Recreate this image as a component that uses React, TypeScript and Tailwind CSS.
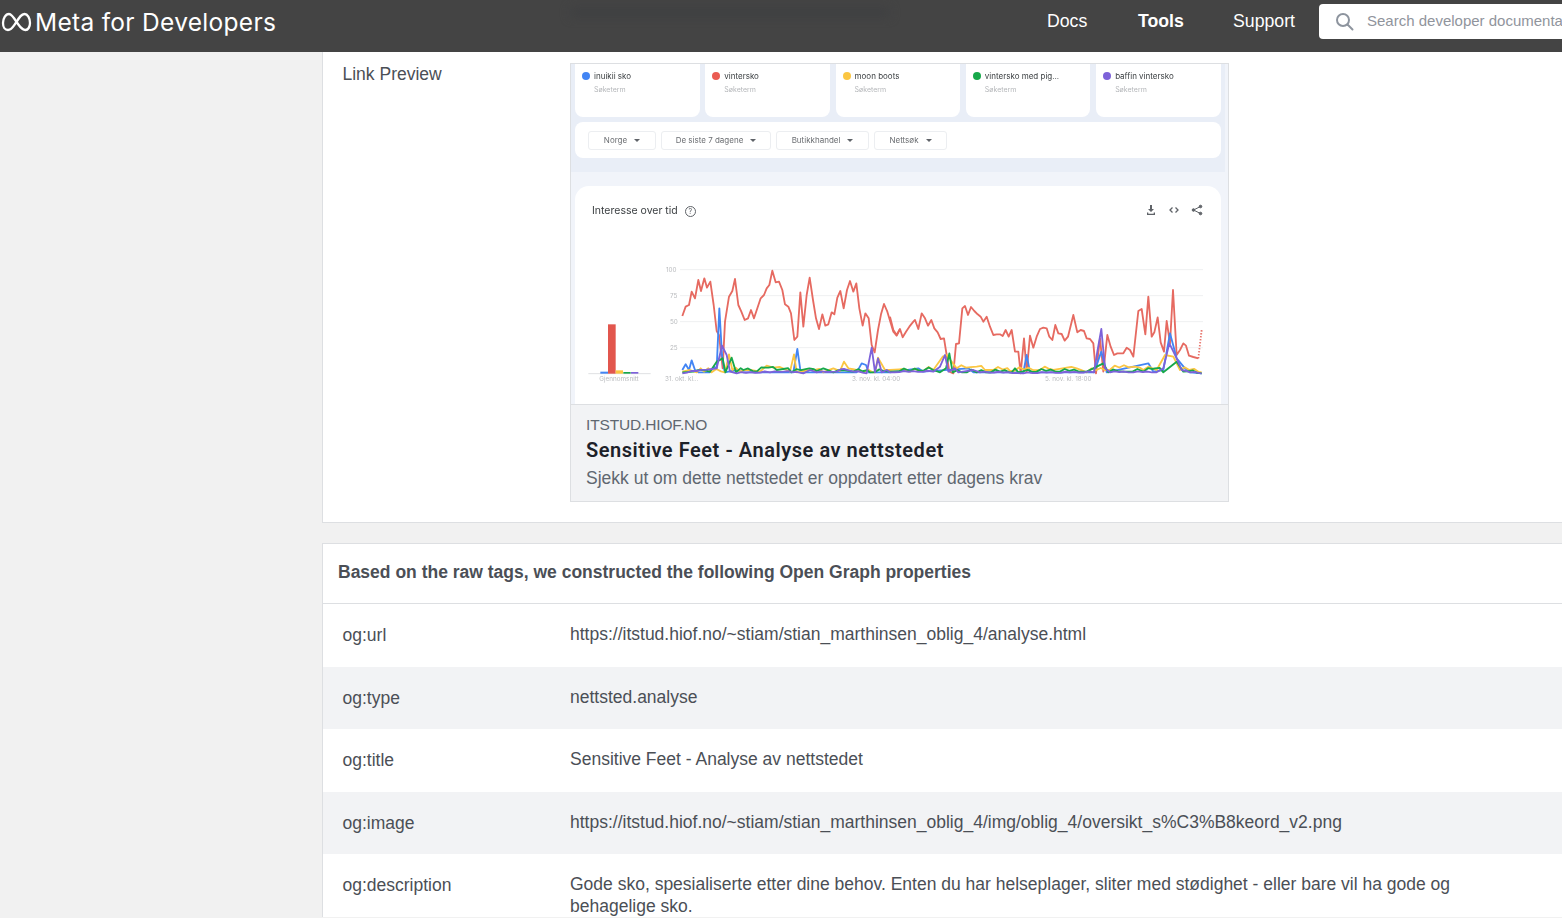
const redA: number[][] = [
  [337,183],[347,155],[357,150],[365,110],[375,130],[385,75],[393,108],[403,70],[411,98],[421,80],[431,150],[440,228],[447,240],[458,340],[465,200],[477,125],[487,108],[495,72],[505,150],[514,170],[524,195],[534,190],[543,165],[552,190],[562,160],[572,130],[582,120],[590,100],[598,90],[607,47],[617,82],[627,80],[637,105],[645,148],[655,155],[663,175],[673,255],[682,245],[691,112],[700,215],[710,120],[719,68],[729,135],[738,190],[747,222],[757,178],[766,212],[775,208],[785,172],[793,178],[802,128],[811,108],[821,160],[831,105],[840,78],[850,110],[859,85],[868,160],[878,212],[886,175],[896,190],[905,270],[914,292],[924,225],[933,178],[942,147],[952,170],[961,200],[970,230],[980,242],[990,222],
];

// second half of the red line, read off with its origin 960 units further right
const redB: number[][] = [
  [0,185],[10,225],[20,240],[30,222],[38,247],[48,230],[58,215],[70,200],[75,195],[85,222],[95,175],[105,190],[114,212],[124,195],[133,220],[143,232],[152,252],[162,250],[170,300],[178,350],[190,355],[198,267],[207,265],[217,160],[225,153],[234,180],[243,156],[253,168],[263,178],[272,185],[280,200],[290,185],[300,215],[310,240],[320,238],[330,238],[338,243],[347,225],[356,245],[365,225],[375,290],[385,290],[392,355],[402,250],[410,350],[420,242],[430,278],[440,245],[450,222],[460,218],[470,220],[478,245],[487,255],[496,210],[505,235],[515,237],[524,257],[534,245],[550,180],[562,232],[572,225],[582,228],[590,250],[600,252],[610,265],[618,355],[630,250],[640,350],[652,240],[662,275],[672,300],[682,295],[700,295],[710,278],[720,285],[730,305],[745,168],[755,162],[766,238],[775,125],[785,245],[793,232],[803,187],[812,262],[822,290],[830,198],[840,265],[849,105],[860,300],[870,285],[880,265],[888,272],[897,302],[910,306],[925,310],
];

const toPoints = (pts: number[][], dx = 0) => pts.map(([x, y]) => `${x + dx},${y}`).join(' ');

// small bumps for the long flat stretches along the baseline
const jag = (line: string, amp: number) => {
  const pts = line.split(' ').map((p) => p.split(',').map(Number));
  const out: string[] = [];
  pts.forEach(([x, y], i) => {
    out.push(`${x},${y}`);
    const next = pts[i + 1];
    if (!next || y < 335 || next[1] < 335) return;
    for (let sx = x + 14; sx < next[0] - 6; sx += 14) {
      const t = (sx - x) / (next[0] - x);
      const bump = [0, amp, amp * 0.3, amp * 0.8, 0][Math.floor(sx / 14) % 5];
      out.push(`${sx},${Math.min(355, y + (next[1] - y) * t) - bump}`);
    }
  });
  return out.join(' ');
};

const blue = '337,345 347,328 357,345 365,316 375,345 385,352 420,352 432,335 440,340 448,160 456,300 464,352 500,345 520,352 660,352 670,352 682,282 692,352 860,352 875,325 888,330 896,352 960,352 1045,340 1060,350 1195,340 1210,352 1360,352 1370,300 1380,352 1572,352 1594,290 1610,352 1735,325 1750,350 1780,345 1800,235 1820,310 1845,340 1860,352 1895,355';
const yellow = '337,350 360,345 380,352 392,340 402,350 415,340 425,352 465,352 477,298 487,345 497,338 510,350 540,345 570,350 590,332 610,338 630,336 650,345 660,350 672,298 680,352 720,345 760,352 790,340 810,348 822,320 835,340 860,345 880,352 915,352 924,308 945,345 960,345 1000,342 1020,350 1090,345 1118,305 1130,300 1160,340 1220,335 1245,345 1270,345 1320,348 1410,345 1450,345 1490,338 1520,340 1550,352 1695,335 1720,345 1735,335 1760,345 1785,300 1810,305 1830,345 1895,352';
const green = '337,352 370,350 400,345 420,350 440,320 458,310 466,352 485,308 498,352 520,345 560,350 595,338 620,345 640,342 665,352 718,340 740,348 760,340 790,352 820,345 850,350 900,352 960,350 1020,348 1090,345 1110,352 1128,340 1138,295 1148,352 1220,352 1325,352 1335,340 1345,352 1400,350 1550,350 1600,325 1615,352 1660,350 1720,350 1755,340 1780,352 1820,320 1840,350 1895,355';
const purple = '337,355 440,340 456,272 470,300 480,350 500,355 600,352 640,350 700,355 720,345 740,352 800,350 822,342 850,350 890,355 905,278 915,352 924,310 935,352 950,345 960,352 1090,350 1110,335 1125,300 1135,350 1155,340 1165,352 1210,345 1230,352 1360,355 1572,352 1582,290 1594,222 1605,340 1620,352 1760,352 1780,340 1798,265 1820,310 1835,345 1860,352 1895,355';

const terms = [
  { name: 'inuikii sko', dot: 'bg-[#4285f4]' },
  { name: 'vintersko', dot: 'bg-[#ea5b52]' },
  { name: 'moon boots', dot: 'bg-[#fbc642]' },
  { name: 'vintersko med pig...', dot: 'bg-[#17a84a]' },
  { name: 'baffin vintersko', dot: 'bg-[#7d62d9]' },
];

const filters = [
  { label: 'Norge', w: 'w-[68px]' },
  { label: 'De siste 7 dagene', w: 'w-[110px]' },
  { label: 'Butikkhandel', w: 'w-[93px]' },
  { label: 'Nettsøk', w: 'w-[73px]' },
];

const rows = [
  { k: 'og:url', v: 'https://itstud.hiof.no/~stiam/stian_marthinsen_oblig_4/analyse.html', shade: false },
  { k: 'og:type', v: 'nettsted.analyse', shade: true },
  { k: 'og:title', v: 'Sensitive Feet - Analyse av nettstedet', shade: false },
  { k: 'og:image', v: 'https://itstud.hiof.no/~stiam/stian_marthinsen_oblig_4/img/oblig_4/oversikt_s%C3%B8keord_v2.png', shade: true },
  { k: 'og:description', v: 'Gode sko, spesialiserte etter dine behov. Enten du har helseplager, sliter med stødighet - eller bare vil ha gode og behagelige sko.', shade: false },
];

const TrendsImage = () => (
  <div className="w-[657px] h-[340px] overflow-hidden bg-[#f1f4fa] font-['Inter',sans-serif] blur-[0.5px]">
    <div className="h-[108px] bg-[#e9eef7] w-[654px] pl-[4px]">
      {/* search term cards */}
      <div className="flex gap-[5.700px] h-[53px]">
        {terms.map((t) => (
          <div key={t.name} className="w-[124.600px] h-[53px] bg-white rounded-b-[8px] pl-[7px] pt-[8px]">
            <div className="flex items-center gap-[4px] h-[8px]">
              <span className={`w-[8px] h-[8px] rounded-full ${t.dot}`} />
              <span className="text-[8px] text-[#3c4043] whitespace-nowrap">{t.name}</span>
            </div>
            <div className="text-[7px] text-[#b5b7ba] pl-[12px] mt-[5px]">Søketerm</div>
          </div>
        ))}
      </div>
      {/* filter bar */}
      <div className="mt-[5px] w-[646px] h-[36px] bg-white rounded-[8px] flex items-center gap-[5px] pl-[13px]">
        {filters.map((f) => (
          <div
            key={f.label}
            className={`${f.w} h-[19px] border border-[#eceef1] rounded-[3px] flex items-center justify-center gap-[7px] text-[8px] text-[#6b6e72]`}
          >
            {f.label}
            <span className="w-0 h-0 border-x-[3px] border-x-transparent border-t-[3px] border-t-[#5f6368]" />
          </div>
        ))}
      </div>
    </div>
    {/* chart card */}
    <div className="pt-[14px] pl-[4px]">
      <div className="w-[646px] h-[230px] bg-white rounded-t-[14px] relative">
        <div className="flex items-center gap-[7px] pl-[17px] pt-[19px] text-[10.500px] leading-[12px] text-[#3c4043]">
          Interesse over tid
          <span className="w-[11px] h-[11px] rounded-full border border-[#5f6368] text-[7px] leading-[9px] text-center text-[#5f6368]">?</span>
        </div>
        <div className="absolute right-[18px] top-[18px] flex items-center gap-[11px] text-[#5f6368]">
          <svg width="12" height="12" viewBox="0 0 12 12" fill="currentColor">
            <path d="M5 1h2v4h2L6 8 3 5h2zM2 8.500h1.300v1.200h5.400V8.500H10V11H2z" />
          </svg>
          <svg width="12" height="12" viewBox="0 0 12 12" fill="none" stroke="currentColor" strokeWidth="1.300">
            <path d="M4.500 3.500 2 6l2.500 2.500M7.500 3.500 10 6 7.500 8.500" />
          </svg>
          <svg width="12" height="12" viewBox="0 0 12 12" fill="currentColor" stroke="currentColor" strokeWidth="1">
            <circle cx="9.500" cy="2.500" r="1.300" />
            <circle cx="2.500" cy="6" r="1.300" />
            <circle cx="9.500" cy="9.500" r="1.300" />
            <path d="M9.500 2.500 2.500 6l7 3.500" fill="none" />
          </svg>
        </div>
      </div>
    </div>
  </div>
);

const TrendsChart = () => (
  <svg
    className="absolute left-[-1px] top-[191px] blur-[0.5px]"
    width="657"
    height="150"
    viewBox="0 0 1971 450"
  >
    <g stroke="#eff0f1" strokeWidth="3">
      <path d="M330 44H1899M330 122H1899M330 200H1899M330 278H1899" />
    </g>
    <path d="M55 356H242" stroke="#dfe1e3" strokeWidth="3" />
    <rect x="91" y="350" width="23" height="6" fill="#4285f4" />
    <rect x="114" y="208" width="23" height="148" fill="#e2564d" />
    <rect x="137" y="346" width="22" height="10" fill="#fbc642" />
    <rect x="160" y="351" width="22" height="5" fill="#17a84a" />
    <rect x="183" y="351" width="22" height="5" fill="#7d62d9" />
    <g fill="none" strokeWidth="5.500" strokeLinejoin="round">
      <polyline points={toPoints(redA)} stroke="#e66a61" />
      <polyline points={toPoints(redB, 960)} stroke="#e66a61" />
      <polyline points="1885,310 1895,225" stroke="#e66a61" strokeDasharray="4 5" />
      <polyline points={blue} stroke="#4285f4" />
      <polyline points={jag(yellow, 10)} stroke="#fbc642" />
      <polyline points={jag(green, 8)} stroke="#17a84a" />
      <polyline points={jag(purple, 3)} stroke="#7d62d9" />
    </g>
    <g fill="#b9bbbe" fontSize="19" fontFamily="Inter, sans-serif">
      <text x="288" y="52">100</text>
      <text x="300" y="130">75</text>
      <text x="300" y="208">50</text>
      <text x="300" y="286">25</text>
      <text x="285" y="378">31. okt. kl...</text>
      <text x="88" y="378">Gjennomsnitt</text>
      <text x="846" y="378">3. nov. kl. 04:00</text>
      <text x="1425" y="378">5. nov. kl. 18:00</text>
    </g>
  </svg>
);

export default function App() {
  return (
    <div className="h-[918px] overflow-hidden flex flex-col bg-[#f1f1f1] font-['Liberation_Sans',sans-serif] text-[17.500px] text-[#4b4f56]">
      {/* top bar */}
      <header className="relative h-[52px] shrink-0 bg-[#444444] flex items-center pb-[9px] overflow-hidden">
        <div className="absolute left-[570px] top-[8px] w-[320px] h-[9px] bg-[#3f4042] blur-[5px]" />
        <div className="relative flex items-center pl-[1px] w-[1047px] shrink-0">
          <svg width="31" height="20" viewBox="0 0 31 20" fill="none" stroke="white" strokeWidth="2.300">
            <path d="M15.500 10C12.500 5 10.500 2 8 2 4.500 2 2 6.500 2 11c0 4 2 7 5 7 4 0 6-5 8.500-8C18.500 5 20.500 2 23.500 2 26.500 2 29 6 29 11c0 4-2 7-4.500 7-4 0-6-4-9-8z" />
          </svg>
          <span className="ml-[3px] text-[24.500px] leading-[30px] font-['Inter',sans-serif] text-white tracking-[0.300px]">Meta for Developers</span>
        </div>
        <nav className="relative flex items-center text-[17.700px] text-white">
          <span className="w-[91px]">Docs</span>
          <span className="w-[95px] font-bold">Tools</span>
          <span className="w-[86px]">Support</span>
        </nav>
        <div className="relative h-[35px] w-[400px] shrink-0 bg-white rounded-[4px] flex items-center pl-[16px] text-[15px] text-[#90949c]">
          <svg width="19" height="19" viewBox="0 0 19 19" fill="none" stroke="#8d949e" strokeWidth="2">
            <circle cx="8" cy="8" r="6" />
            <path d="m12.500 12.500 5 5" strokeLinecap="round" />
          </svg>
          <span className="ml-[13px] whitespace-nowrap">Search developer documentation</span>
        </div>
      </header>

      <div className="flex-1 flex min-h-0">
        <aside className="w-[322px] shrink-0" />
        <main className="flex-1 min-w-0">
          {/* link preview card */}
          <section className="h-[471px] bg-white border-l border-b border-[#dddfe2] flex pl-[19.500px] pt-[11px]">
            <div className="w-[227.500px] leading-[22px]">Link Preview</div>
            <div className="w-[659px] h-[439px] border border-[#dddfe2] relative">
              <TrendsImage />
              <TrendsChart />
              <div className="h-[97px] border-t border-[#dddfe2] bg-[#f2f3f5] pl-[15px] pt-[11px]">
                <div className="text-[15.500px] leading-[18px] text-[#606770] tracking-[-0.150px]">ITSTUD.HIOF.NO</div>
                <div className="mt-[3px] font-['Roboto',sans-serif] font-semibold text-[20px] leading-[26px] text-[#1d2129] tracking-[0.550px]">
                  Sensitive Feet - Analyse av nettstedet
                </div>
                <div className="mt-[3px] leading-[24px] text-[#606770]">Sjekk ut om dette nettstedet er oppdatert etter dagens krav</div>
              </div>
            </div>
          </section>

          {/* constructed properties */}
          <section className="mt-[20px] bg-white border-l border-t border-[#dddfe2]">
            <h2 className="h-[60px] border-b border-[#dddfe2] pl-[15px] pb-[2px] flex items-center font-bold text-[17.500px] text-[#4b4f56]">
              Based on the raw tags, we constructed the following Open Graph properties
            </h2>
            {rows.map((r) => (
              <div key={r.k} className={`flex pl-[19.500px] h-[62.500px] pt-[19px] ${r.shade ? 'bg-[#f2f3f5]' : 'bg-white'}`}>
                <div className="w-[227.500px] leading-[22px] pt-[1px] shrink-0">{r.k}</div>
                <div className="w-[900px] leading-[22px]">{r.v}</div>
              </div>
            ))}
          </section>
        </main>
      </div>
    </div>
  );
}
